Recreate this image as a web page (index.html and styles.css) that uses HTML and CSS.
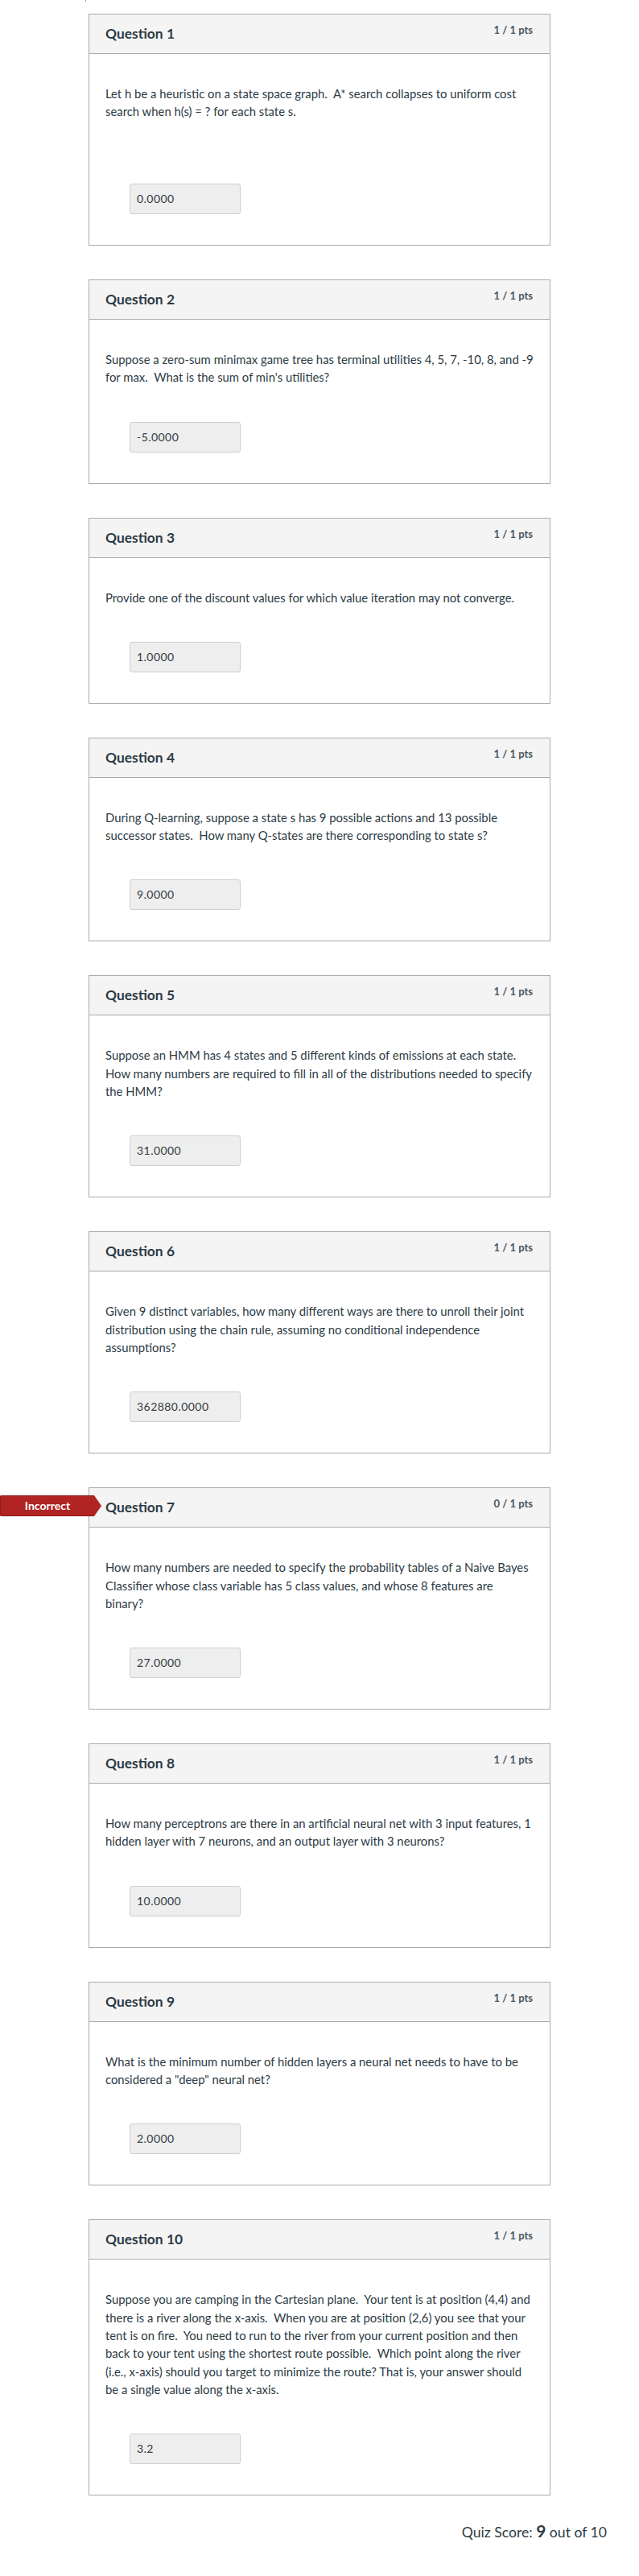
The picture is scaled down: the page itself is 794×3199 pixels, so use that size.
FILE: index.html
```html
<!DOCTYPE html>
<html lang="en">
<head>
<meta charset="utf-8">
<title>Quiz Results</title>
<link rel="stylesheet" href="styles.css">
</head>
<body>
<div class="top-mark"></div>
<main class="quiz">

  <section class="question">
    <header class="q-header">
      <h3 class="q-title">Question 1</h3>
      <span class="q-pts">1 / 1 pts</span>
    </header>
    <div class="q-body">
      <p class="q-text q-text-extra">Let h be a heuristic on a state space graph.&nbsp; A* search collapses to uniform cost search when h(s) = ? for each state s.</p>
      <div class="answer">0.0000</div>
    </div>
  </section>

  <section class="question">
    <header class="q-header">
      <h3 class="q-title">Question 2</h3>
      <span class="q-pts">1 / 1 pts</span>
    </header>
    <div class="q-body">
      <p class="q-text">Suppose a zero-sum minimax game tree has terminal utilities 4, 5, 7, -10, 8, and -9 for max.&nbsp; What is the sum of min's utilities?</p>
      <div class="answer">-5.0000</div>
    </div>
  </section>

  <section class="question">
    <header class="q-header">
      <h3 class="q-title">Question 3</h3>
      <span class="q-pts">1 / 1 pts</span>
    </header>
    <div class="q-body">
      <p class="q-text">Provide one of the discount values for which value iteration may not converge.</p>
      <div class="answer">1.0000</div>
    </div>
  </section>

  <section class="question">
    <header class="q-header">
      <h3 class="q-title">Question 4</h3>
      <span class="q-pts">1 / 1 pts</span>
    </header>
    <div class="q-body">
      <p class="q-text">During Q-learning, suppose a state s has 9 possible actions and 13 possible successor states.&nbsp; How many Q-states are there corresponding to state s?</p>
      <div class="answer">9.0000</div>
    </div>
  </section>

  <section class="question">
    <header class="q-header">
      <h3 class="q-title">Question 5</h3>
      <span class="q-pts">1 / 1 pts</span>
    </header>
    <div class="q-body">
      <p class="q-text">Suppose an HMM has 4 states and 5 different kinds of emissions at each state.&nbsp; How many numbers are required to fill in all of the distributions needed to specify the HMM?</p>
      <div class="answer">31.0000</div>
    </div>
  </section>

  <section class="question">
    <header class="q-header">
      <h3 class="q-title">Question 6</h3>
      <span class="q-pts">1 / 1 pts</span>
    </header>
    <div class="q-body">
      <p class="q-text">Given 9 distinct variables, how many different ways are there to unroll their joint distribution using the chain rule, assuming no conditional independence assumptions?</p>
      <div class="answer">362880.0000</div>
    </div>
  </section>

  <section class="question">
    <div class="badge-incorrect">Incorrect</div>
    <header class="q-header">
      <h3 class="q-title">Question 7</h3>
      <span class="q-pts">0 / 1 pts</span>
    </header>
    <div class="q-body">
      <p class="q-text">How many numbers are needed to specify the probability tables of a Naive Bayes Classifier whose class variable has 5 class values, and whose 8 features are binary?</p>
      <div class="answer">27.0000</div>
    </div>
  </section>

  <section class="question">
    <header class="q-header">
      <h3 class="q-title">Question 8</h3>
      <span class="q-pts">1 / 1 pts</span>
    </header>
    <div class="q-body">
      <p class="q-text">How many perceptrons are there in an artificial neural net with 3 input features, 1 hidden layer with 7 neurons, and an output layer with 3 neurons?</p>
      <div class="answer">10.0000</div>
    </div>
  </section>

  <section class="question">
    <header class="q-header">
      <h3 class="q-title">Question 9</h3>
      <span class="q-pts">1 / 1 pts</span>
    </header>
    <div class="q-body">
      <p class="q-text">What is the minimum number of hidden layers a neural net needs to have to be considered a "deep" neural net?</p>
      <div class="answer">2.0000</div>
    </div>
  </section>

  <section class="question">
    <header class="q-header">
      <h3 class="q-title">Question 10</h3>
      <span class="q-pts">1 / 1 pts</span>
    </header>
    <div class="q-body">
      <p class="q-text">Suppose you are camping in the Cartesian plane.&nbsp; Your tent is at position (4,4) and there is a river along the x-axis.&nbsp; When you are at position (2,6) you see that your tent is on fire.&nbsp; You need to run to the river from your current position and then back to your tent using the shortest route possible.&nbsp; Which point along the river (i.e., x-axis) should you target to minimize the route? That is, your answer should be a single value along the x-axis.</p>
      <div class="answer">3.2</div>
    </div>
  </section>

</main>
<div class="quiz-score">Quiz Score: <strong class="score-num">9</strong> out of 10</div>
</body>
</html>
```

FILE: styles.css
```css
html, body {
  margin: 0;
  padding: 0;
  background: #ffffff;
}
body {
  font-family: Lato, "Open Sans", sans-serif;
  color: #2d3b45;
  position: relative;
}
.top-mark {
  position: absolute;
  left: 106px;
  top: 0;
  width: 1px;
  height: 2px;
  background: #9a9a9a;
}
.quiz {
  width: 574px;
  margin: 0 auto;
  padding-top: 17px;
  display: flex;
  flex-direction: column;
  gap: 42px;
}
.question {
  position: relative;
  border: 1px solid #ababab;
  background: #fff;
}
.q-header {
  height: 48px;
  background: #f4f4f4;
  border-bottom: 1px solid #ababab;
  display: flex;
  justify-content: space-between;
  align-items: flex-start;
  padding: 0 21px 0 20px;
}
.q-title {
  margin: 0;
  padding-top: 14px;
  font-size: 17.4px;
  line-height: 20px;
  font-weight: 700;
  color: #2d3b45;
}
.q-pts {
  padding-top: 11px;
  font-size: 13px;
  line-height: 16px;
  font-weight: 700;
  color: #4b5660;
}
.q-body {
  padding: 38px 20px 38px;
}
.q-text {
  margin: 0 0 44px;
  font-size: 14.85px;
  line-height: 22.3px;
  color: #2d3b45;
}
.q-text-extra {
  margin-bottom: 78.4px;
}
.answer {
  margin-left: 30px;
  width: 128px;
  height: 36px;
  padding: 0 0 0 8px;
  background: #eeeeee;
  border: 1px solid #cfcfcf;
  border-radius: 3px;
  font-size: 14px;
  letter-spacing: 0.45px;
  line-height: 36px;
  color: #333c44;
}
.badge-incorrect {
  position: absolute;
  left: -111px;
  top: 9px;
  width: 117px;
  height: 26px;
  box-sizing: border-box;
  background: #b02423;
  border: 1px solid #8e1b1b;
  border-right: none;
  border-radius: 2px 0 0 2px;
  color: #fff;
  font-size: 14px;
  font-weight: 700;
  line-height: 24px;
  text-align: center;
}
.badge-incorrect::after {
  content: "";
  position: absolute;
  right: -9px;
  top: -1px;
  width: 0;
  height: 0;
  border-top: 13px solid transparent;
  border-bottom: 13px solid transparent;
  border-left: 9px solid #b02423;
}
.quiz-score {
  text-align: right;
  padding: 31px 40px 0 0;
  font-size: 17.6px;
  color: #2d3b45;
}
.score-num {
  font-size: 21px;
  font-weight: 700;
}
```
